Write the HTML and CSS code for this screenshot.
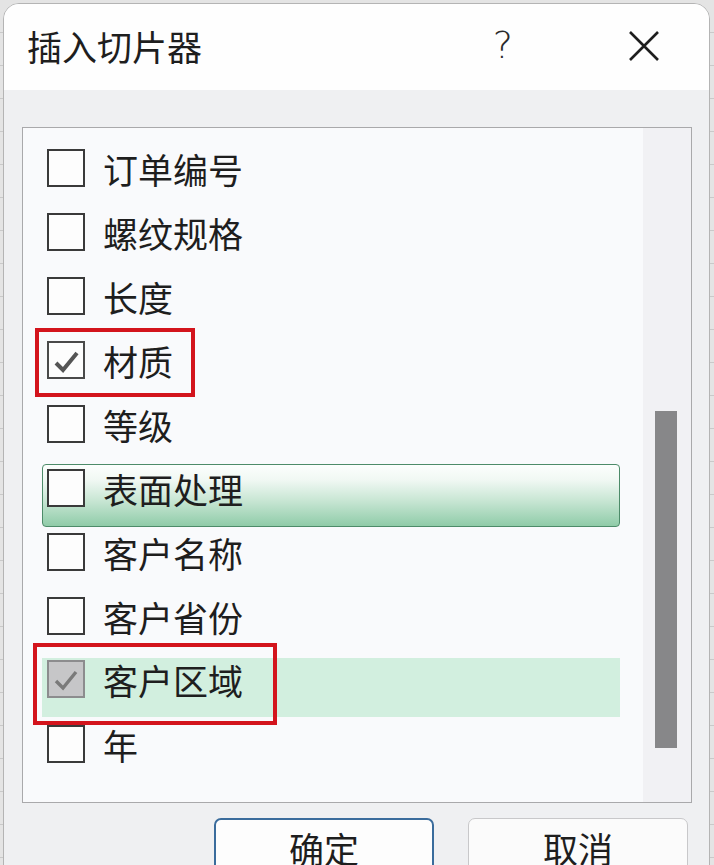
FILE: index.html
```html
<!DOCTYPE html>
<html lang="zh-CN">
<head>
  <meta charset="UTF-8">
  <meta name="viewport" content="width=device-width, initial-scale=1.0">
  <title>插入切片器</title>
  <link rel="stylesheet" href="styles.css">
</head>
<body>
  <div class="dialog">
    <div class="titlebar">
      <span class="title">插入切片器</span>
      <span class="help">?</span>
      <svg class="close" width="32" height="32" viewBox="0 0 32 32">
        <path d="M2 2 L30 30 M30 2 L2 30" stroke="#1e1e1e" stroke-width="2.6" fill="none"/>
      </svg>
    </div>

    <div class="content">
      <div class="listbox">
        <div class="rows">
          <div class="row"><span class="box"></span><span class="label">订单编号</span></div>
          <div class="row"><span class="box"></span><span class="label">螺纹规格</span></div>
          <div class="row"><span class="box"></span><span class="label">长度</span></div>
          <div class="row">
            <span class="box checked">
              <svg width="38" height="38" viewBox="0 0 38 38"><polyline points="9,22 16,29 30,12" stroke="#555" stroke-width="4" fill="none"/></svg>
            </span>
            <span class="label">材质</span>
            <span class="mark mark-small"></span>
          </div>
          <div class="row"><span class="box"></span><span class="label">等级</span></div>
          <div class="row selected"><span class="box"></span><span class="label">表面处理</span></div>
          <div class="row"><span class="box"></span><span class="label">客户名称</span></div>
          <div class="row"><span class="box"></span><span class="label">客户省份</span></div>
          <div class="row hover">
            <span class="box dim">
              <svg width="38" height="38" viewBox="0 0 38 38"><polyline points="9,21 16,28 29,12" stroke="#7a7a7a" stroke-width="3.4" fill="none"/></svg>
            </span>
            <span class="label">客户区域</span>
            <span class="mark mark-wide"></span>
          </div>
          <div class="row"><span class="box"></span><span class="label">年</span></div>
        </div>
        <div class="track">
          <div class="thumb"></div>
        </div>
      </div>

      <div class="footer">
        <button class="btn primary">确定</button>
        <button class="btn">取消</button>
      </div>
    </div>
  </div>
</body>
</html>
```

FILE: styles.css
```css
body {
  margin: 0;
  height: 865px;
  overflow: hidden;
  font-family: "Noto Sans CJK SC", "Noto Sans", sans-serif;
  color: #1e1e1e;
  background-color: #e4e4e4;
  background-image: repeating-linear-gradient(to bottom, transparent 0, transparent 32px, #c9c9c9 32px, #c9c9c9 33px);
}

.dialog {
  margin: 3px 4px 0 3px;
  height: 900px;
  border: 1px solid #b4b4b4;
  border-radius: 16px 16px 0 0;
  overflow: hidden;
  background: #eff0f2;
}

.titlebar {
  height: 86px;
  display: flex;
  align-items: center;
  padding: 0 49px 0 23px;
  background: #fefefe;
}

.title {
  font-size: 35px;
  line-height: 40px;
  margin-top: -2px;
}

.help {
  margin-left: auto;
  margin-right: 115px;
  font-family: "DejaVu Sans", sans-serif;
  font-weight: 200;
  font-size: 38px;
  line-height: 40px;
  color: #2a2a2a;
  margin-top: -4px;
}

.close {
  display: block;
  margin-top: -2px;
}

.content {
  padding: 37px 17px 0 18px;
}

.listbox {
  height: 674px;
  display: flex;
  border: 1px solid #a9a9ab;
  background: #f9fafc;
}

.rows {
  flex: 1;
  padding: 16px 23px 0 19px;
}

.row {
  position: relative;
  height: 64px;
  box-sizing: border-box;
  padding: 5px 0 0 5px;
  display: flex;
  align-items: flex-start;
  gap: 18px;
}

.box {
  width: 38px;
  height: 38px;
  box-sizing: border-box;
  border: 2px solid #3a3a3a;
  background: #fdfdfd;
  flex: none;
  position: relative;
}

.box svg {
  position: absolute;
  left: -2px;
  top: -2px;
}

.box.checked {
  border-color: #4a4a4a;
}

.box.dim {
  background: #c6c6c8;
  border-color: #8c8c8e;
}

.label {
  font-size: 35px;
  line-height: 38px;
  margin-top: 1px;
}

.row.selected {
  border: 1px solid #4d8b69;
  border-radius: 4px;
  padding: 4px 0 0 4px;
  height: 63px;
  margin-bottom: 1px;
  background: linear-gradient(to bottom, #fcfefd 0%, #f0f8f3 25%, #c6e5d2 60%, #9dd2b3 90%, #90cba8 100%);
}

.row.hover {
  padding-top: 4px;
  background: linear-gradient(to bottom, transparent 2px, #d2efdf 2px, #d2efdf 61px, transparent 61px);
}

.mark {
  position: absolute;
  border: 4px solid #d3141c;
  box-sizing: border-box;
}

.mark-small {
  left: -7px;
  top: -8px;
  width: 160px;
  height: 69px;
}

.mark-wide {
  left: -9px;
  top: -13px;
  width: 244px;
  height: 82px;
}

.track {
  width: 48px;
  background: #f1f1f4;
  padding-top: 283px;
  box-sizing: border-box;
}

.thumb {
  width: 22px;
  height: 337px;
  margin-left: 12px;
  background: #878789;
}

.footer {
  display: flex;
  justify-content: flex-end;
  gap: 34px;
  padding: 15px 4px 0 0;
}

.btn {
  width: 220px;
  height: 64px;
  font-family: "Noto Sans CJK SC", "Noto Sans", sans-serif;
  font-size: 35px;
  line-height: 40px;
  padding: 8px 0 13px;
  color: #1e1e1e;
  background: #fbfbfb;
  border: 1px solid #c8c8ca;
  border-radius: 7px;
  box-sizing: border-box;
}

.btn.primary {
  border: 2px solid #3a6c9c;
  background: #fdfdfd;
  padding: 7px 0 12px;
}
```
